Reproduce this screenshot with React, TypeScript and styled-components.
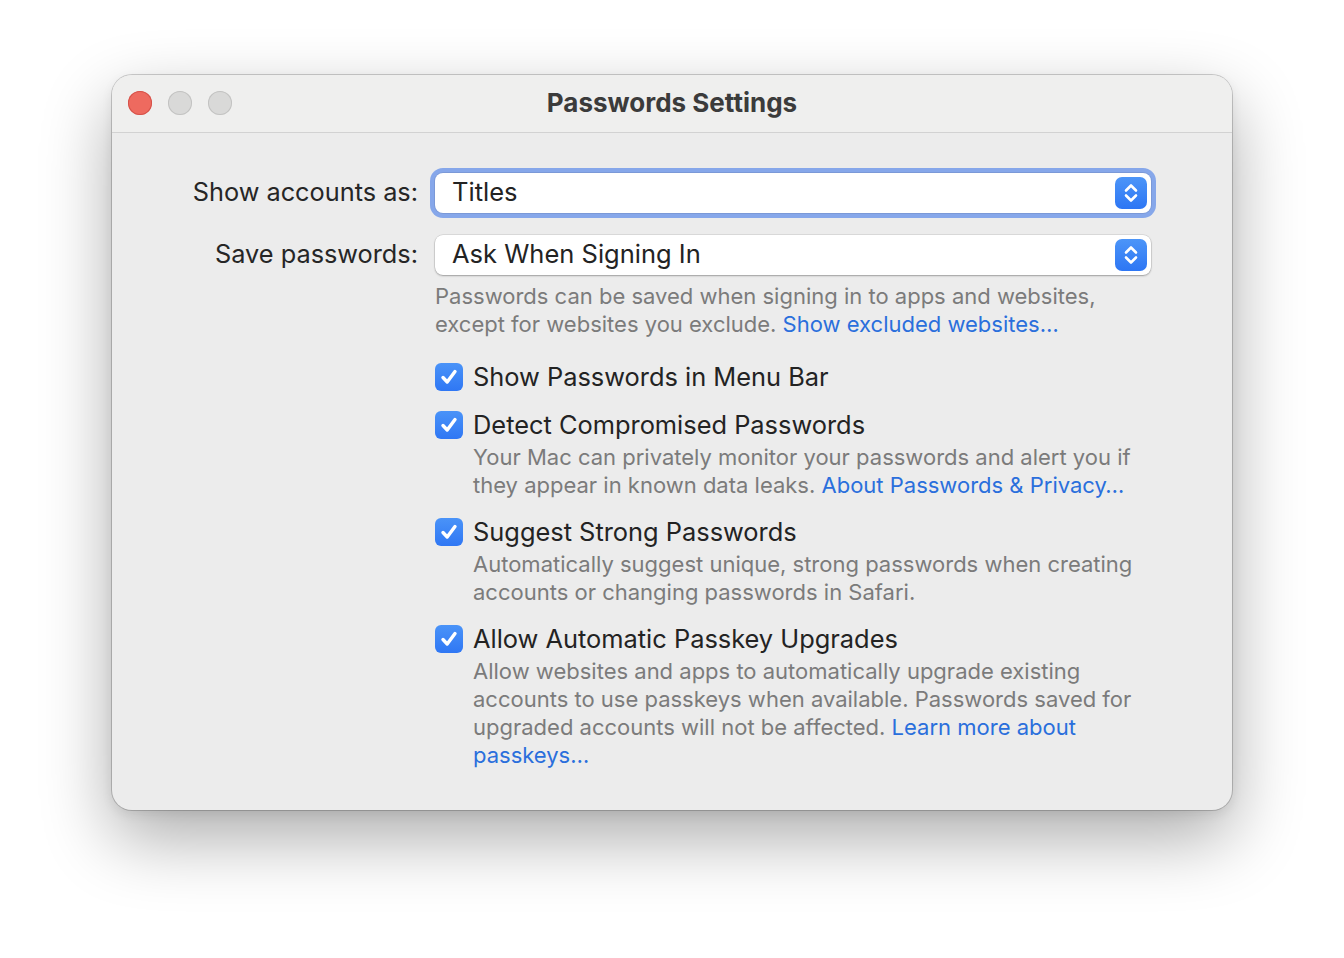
import * as React from 'react';
import styled, { createGlobalStyle } from 'styled-components';

const GlobalStyle = createGlobalStyle`
  html, body {
    margin: 0;
    padding: 0;
    background: #ffffff;
  }
  body {
    font-family: Inter, "Noto Sans", "Liberation Sans", sans-serif;
    -webkit-font-smoothing: antialiased;
  }
`;

const Page = styled.div`
  width: 1344px;
  height: 958px;
  padding: 75px 0 0 112px;
  box-sizing: border-box;
`;

const Window = styled.div`
  width: 1120px;
  background: #ececec;
  border-radius: 20px;
  overflow: hidden;
  box-shadow: 0 0 0 1px rgba(0, 0, 0, 0.18), 0 28px 70px rgba(0, 0, 0, 0.33),
    0 4px 12px rgba(0, 0, 0, 0.08);
`;

const TitleBar = styled.div`
  height: 57px;
  display: flex;
  align-items: center;
  position: relative;
  background: #efefee;
  border-bottom: 1px solid #d2d2d2;
  h1 {
    flex: 1;
    margin: 0 0 2px;
    text-align: center;
    font-size: 26px;
    font-weight: 700;
    color: #3b3b3b;
  }
`;

const Lights = styled.div`
  position: absolute;
  left: 16px;
  top: 16px;
  display: flex;
  gap: 16px;
`;

const Light = styled.span<{ $color: string; $border: string }>`
  width: 24px;
  height: 24px;
  border-radius: 50%;
  background: ${(p) => p.$color};
  box-shadow: inset 0 0 0 1px ${(p) => p.$border};
`;

const Content = styled.div`
  padding: 40px 81px 38px 0;
  display: grid;
  grid-template-columns: 306px 1fr;
  column-gap: 17px;
  align-items: start;
`;

const Label = styled.div`
  text-align: right;
  font-size: 25.3px;
  color: #262626;
  line-height: 38px;
  white-space: nowrap;
`;

const Field = styled.div<{ $gap?: number }>`
  margin-bottom: ${(p) => p.$gap ?? 0}px;
`;

const Popup = styled.div<{ $focused?: boolean }>`
  height: 40px;
  background: #ffffff;
  border-radius: 8px;
  display: flex;
  align-items: center;
  padding: 0 4px 0 17px;
  box-sizing: border-box;
  box-shadow: ${(p) =>
    p.$focused
      ? '0 0 0 1px rgba(0,0,0,0.08), 0 0 0 5px #86a7ea'
      : '0 0 0 0.5px rgba(0,0,0,0.14), 0 1px 2px rgba(0,0,0,0.28)'};
  span {
    flex: 1;
    font-size: 25.5px;
    color: #232323;
    margin-bottom: 3px;
  }
`;

const Stepper = styled.div`
  width: 32px;
  height: 32px;
  border-radius: 7px;
  background: linear-gradient(#4c95f8, #2d76f4);
  display: flex;
  align-items: center;
  justify-content: center;
`;

const Desc = styled.p`
  margin: 0;
  font-size: 22px;
  line-height: 28px;
  color: #7b7b7b;
  a {
    color: #2a6fdc;
    text-decoration: none;
  }
`;

const Options = styled.div`
  display: flex;
  flex-direction: column;
  gap: 12px;
  margin-top: 21px;
`;

const Option = styled.div`
  display: grid;
  grid-template-columns: 28px 1fr;
  column-gap: 10px;
  row-gap: 0;
`;

const Check = styled.span`
  width: 28px;
  height: 28px;
  margin-top: 4px;
  border-radius: 6px;
  background: linear-gradient(#4a93f8, #2f77f4);
  display: flex;
  align-items: center;
  justify-content: center;
`;

const OptionTitle = styled.div`
  font-size: 25.4px;
  line-height: 36px;
  color: #232323;
`;

const OptionDesc = styled(Desc)`
  grid-column: 2;
  margin-bottom: 3px;
`;

const Chevrons = () => (
  <svg width="16" height="24" viewBox="0 0 16 24" fill="none">
    <path d="M3 9.5 8 4.5 13 9.5" stroke="#fff" strokeWidth="2.6" strokeLinecap="round" strokeLinejoin="round" />
    <path d="M3 14.5 8 19.5 13 14.5" stroke="#fff" strokeWidth="2.6" strokeLinecap="round" strokeLinejoin="round" />
  </svg>
);

const Tick = () => (
  <svg width="22" height="22" viewBox="0 0 22 22" fill="none">
    <path d="M5 11.5 9.2 16 17 5.5" stroke="#fff" strokeWidth="3.4" strokeLinecap="round" strokeLinejoin="round" />
  </svg>
);

const options = [
  { title: 'Show Passwords in Menu Bar' },
  {
    title: 'Detect Compromised Passwords',
    desc: (
      <>
        Your Mac can privately monitor your passwords and alert you if
        <br />
        they appear in known data leaks. <a href="#">About Passwords &amp; Privacy…</a>
      </>
    ),
  },
  {
    title: 'Suggest Strong Passwords',
    desc: (
      <>
        Automatically suggest unique, strong passwords when creating
        <br />
        accounts or changing passwords in Safari.
      </>
    ),
  },
  {
    title: 'Allow Automatic Passkey Upgrades',
    desc: (
      <>
        Allow websites and apps to automatically upgrade existing
        <br />
        accounts to use passkeys when available. Passwords saved for
        <br />
        upgraded accounts will not be affected. <a href="#">Learn more about</a>
        <br />
        <a href="#">passkeys…</a>
      </>
    ),
  },
];

const App: React.FC = () => {
  return (
    <>
      <GlobalStyle />
      <Page>
        <Window>
          <TitleBar>
            <Lights>
              <Light $color="#ee6a5f" $border="#d5524a" />
              <Light $color="#d9d9d8" $border="#c3c3c2" />
              <Light $color="#d9d9d8" $border="#c3c3c2" />
            </Lights>
            <h1>Passwords Settings</h1>
          </TitleBar>
          <Content>
            <Label>Show accounts as:</Label>
            <Field $gap={22}>
              <Popup $focused>
                <span>Titles</span>
                <Stepper>
                  <Chevrons />
                </Stepper>
              </Popup>
            </Field>
            <Label>Save passwords:</Label>
            <Field>
              <Popup>
                <span>Ask When Signing In</span>
                <Stepper>
                  <Chevrons />
                </Stepper>
              </Popup>
              <Desc style={{ marginTop: 7 }}>
                Passwords can be saved when signing in to apps and websites,
                <br />
                except for websites you exclude. <a href="#">Show excluded websites…</a>
              </Desc>
              <Options>
                {options.map((o) => (
                  <Option key={o.title}>
                    <Check>
                      <Tick />
                    </Check>
                    <OptionTitle>{o.title}</OptionTitle>
                    {o.desc && <OptionDesc>{o.desc}</OptionDesc>}
                  </Option>
                ))}
              </Options>
            </Field>
          </Content>
        </Window>
      </Page>
    </>
  );
};

export default App;
